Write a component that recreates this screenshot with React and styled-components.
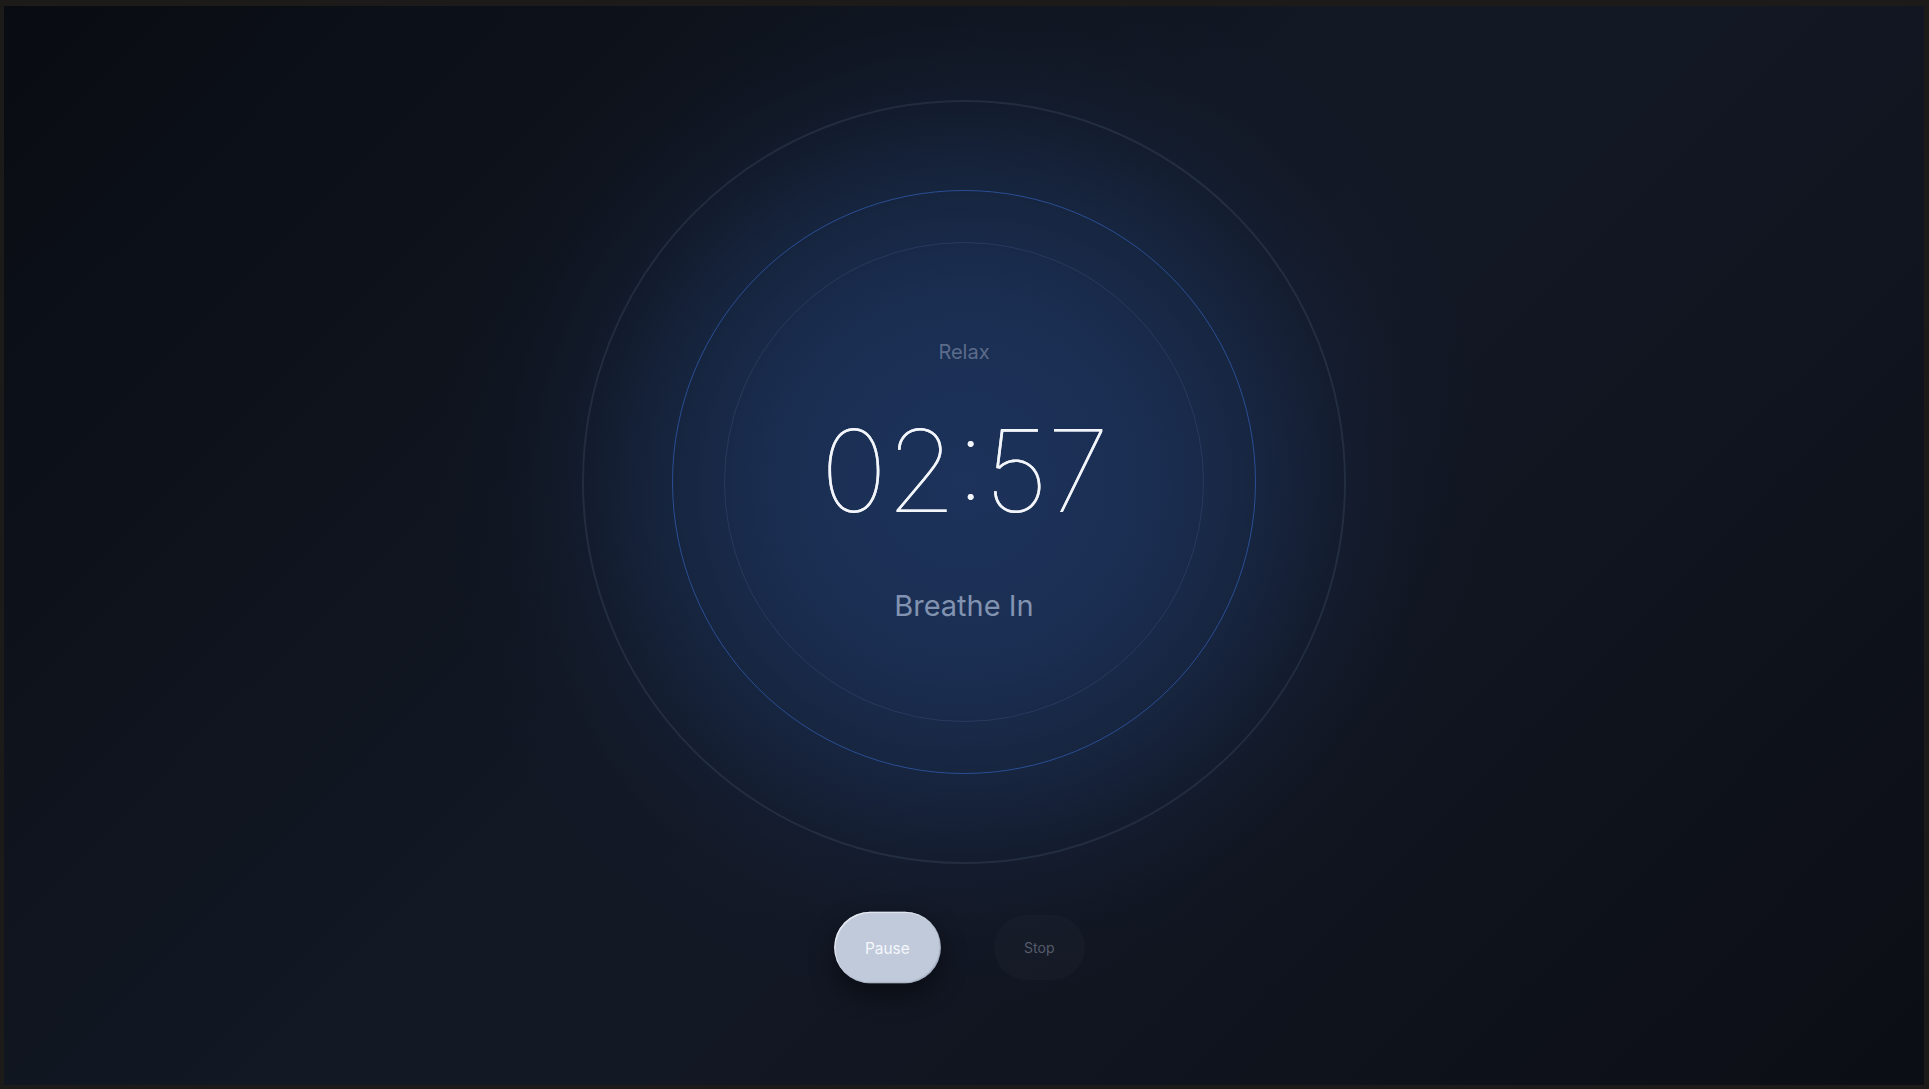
import React from 'react';
import styled, { createGlobalStyle } from 'styled-components';

const GlobalStyle = createGlobalStyle`
    html, body {
        margin: 0;
        padding: 0;
        height: 100%;
        background: #1c1b1a;
    }
    #root {
        height: 100%;
    }
    * {
        box-sizing: border-box;
    }
`;

const Screen = styled.main`
    margin: 6px 5px 4px 4px;
    height: calc(100vh - 10px);
    display: flex;
    flex-direction: column;
    align-items: center;
    justify-content: center;
    gap: 51px;
    padding-bottom: 11px;
    font-family: Inter, 'Noto Sans', sans-serif;
    background: linear-gradient(135deg, #090c12 0%, #121824 45%, #131825 55%, #0b0e14 100%);
    overflow: hidden;
`;

const RingStage = styled.section`
    position: relative;
    width: 764px;
    height: 764px;
    display: grid;
    place-items: center;

    &::before {
        content: '';
        position: absolute;
        inset: -140px;
        border-radius: 50%;
        background: radial-gradient(
            circle,
            rgba(29, 52, 94, 0.95) 0%,
            rgba(28, 50, 90, 0.85) 25%,
            rgba(25, 44, 78, 0.65) 40%,
            rgba(22, 36, 62, 0.4) 52%,
            rgba(20, 30, 50, 0.15) 62%,
            rgba(20, 30, 50, 0) 72%
        );
        pointer-events: none;
    }
`;

const Ring = styled.div`
    grid-area: 1 / 1;
    width: ${(p) => p.$size}px;
    height: ${(p) => p.$size}px;
    border-radius: 50%;
    border: ${(p) => p.$width}px solid ${(p) => p.$color};
    position: relative;
`;

const Readout = styled.div`
    grid-area: 1 / 1;
    position: relative;
    display: flex;
    flex-direction: column;
    align-items: center;
`;

const Label = styled.div`
    font-size: 20px;
    line-height: 24px;
    color: #5b6c8a;
    font-weight: 400;
`;

const Time = styled.div`
    margin-top: 50px;
    font-size: 114px;
    line-height: 114px;
    font-weight: 100;
    color: #f2f5fa;
    letter-spacing: -1.6px;
    font-feature-settings: 'calt' 1;
    text-shadow: 0 0 0.6px rgba(242, 245, 250, 0.8);
`;

const Phase = styled.div`
    margin-top: 60px;
    font-size: 29px;
    line-height: 36px;
    color: #8193b0;
    font-weight: 400;
`;

const Controls = styled.div`
    display: flex;
    align-items: center;
    gap: 58px;
    margin-right: 4px;
`;

const ControlButton = styled.button`
    font-family: Inter, 'Noto Sans', sans-serif;
    font-size: 14px;
    line-height: 17px;
    padding: 24px ${(p) => (p.$active ? 28 : 30)}px;
    border-radius: 999px;
    border: none;
    cursor: pointer;
    background: ${(p) => (p.$active ? '#c0cadb' : 'rgba(255, 255, 255, 0.025)')};
    color: ${(p) => (p.$active ? '#f5f7fb' : '#5c6473')};
    transform: ${(p) => (p.$active ? 'scale(1.1)' : 'none')};
    box-shadow: ${(p) =>
        p.$active
            ? 'inset 1px 1px 1px rgba(255,255,255,0.7), inset -1px -1px 1px rgba(120,130,150,0.4), 0 10px 24px rgba(0,0,0,0.45)'
            : 'none'};
`;

export default function App() {
    return (
        <>
            <GlobalStyle />
            <Screen>
                <RingStage>
                    <Ring $size={764} $width={2} $color="rgba(120, 135, 160, 0.16)" />
                    <Ring $size={584} $width={1.5} $color="rgba(50, 100, 190, 0.65)" />
                    <Ring $size={480} $width={1.5} $color="rgba(110, 140, 190, 0.16)" />
                    <Readout>
                        <Label>Relax</Label>
                        <Time>02:57</Time>
                        <Phase>Breathe In</Phase>
                    </Readout>
                </RingStage>
                <Controls>
                    <ControlButton $active>Pause</ControlButton>
                    <ControlButton>Stop</ControlButton>
                </Controls>
            </Screen>
        </>
    );
}
